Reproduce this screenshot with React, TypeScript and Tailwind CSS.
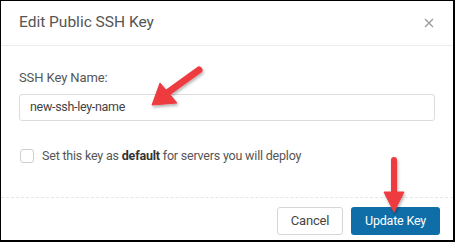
import React from "react";

function Arrows() {
  return (
    <svg
      className="pointer-events-none absolute inset-0"
      width="455"
      height="242"
      viewBox="0 0 455 242"
    >
      <defs>
        <filter id="shadow" x="-20%" y="-20%" width="140%" height="140%">
          <feDropShadow dx="1" dy="2" stdDeviation="1.5" floodColor="#000" floodOpacity="0.3" />
        </filter>
      </defs>
      <g filter="url(#shadow)" fill="#ee3b3f" stroke="#ee3b3f">
        <line x1="198" y1="69" x2="166" y2="92" strokeWidth="7" strokeLinecap="round" />
        <polygon points="151,104 159,82 176,102" strokeWidth="1" strokeLinejoin="round" />
        <line x1="393" y1="159" x2="393" y2="193" strokeWidth="6" strokeLinecap="round" />
        <polygon points="393,211 383,191 403,191" strokeWidth="1" strokeLinejoin="round" />
      </g>
    </svg>
  );
}

export default function App() {
  return (
    <div
      className="relative w-[455px] h-[242px] overflow-hidden bg-white border-l border-t border-r-2 border-b-2 border-black"
      style={{ fontFamily: "Roboto, 'Noto Sans', sans-serif" }}
    >
      <div className="flex h-[45px] items-center justify-between border-b border-[#ececec] pl-[18px] pr-[19px]">
        <h2 className="text-[15.5px] text-[#555]">Edit Public SSH Key</h2>
        <button className="text-[#9a9a9a]">
          <svg width="10" height="10" viewBox="0 0 10 10" stroke="currentColor" strokeWidth="1.3">
            <path d="M1 1 L9 9 M9 1 L1 9" />
          </svg>
        </button>
      </div>

      <div className="flex h-[152px] flex-col border-b border-dashed border-[#e6e6e6] px-[18px] pt-[24px]">
        <label className="text-[13px] tracking-[-0.1px] text-[#555] leading-[16px]">SSH Key Name:</label>
        <div className="mt-[8px] flex h-[27px] w-[416px] items-center rounded-[3px] border border-[#dcdcdc] px-[10px] text-[12.5px] tracking-[-0.3px] text-[#444]">
          new-ssh-ley-name
        </div>
        <div className="mt-[26px] flex items-center gap-[8px] pl-[1px]">
          <span className="h-[14px] w-[14px] rounded-[3px] border border-[#cfcfcf] bg-white" />
          <span className="text-[12.5px] tracking-[-0.2px] text-[#555]">
            Set this key as <b className="font-bold text-[#333]">default</b> for servers you will deploy
          </span>
        </div>
      </div>

      <div className="flex justify-end gap-[8px] pr-[13px] pt-[9px]">
        <button className="h-[28px] w-[66px] rounded-[3px] border border-[#d6d6d6] bg-white text-[13px] tracking-[-0.2px] text-[#444]">
          Cancel
        </button>
        <button className="h-[28px] w-[89px] rounded-[3px] bg-[#0f6ea8] text-[12.5px] tracking-[-0.2px] text-white">
          Update Key
        </button>
      </div>

      <Arrows />
    </div>
  );
}
